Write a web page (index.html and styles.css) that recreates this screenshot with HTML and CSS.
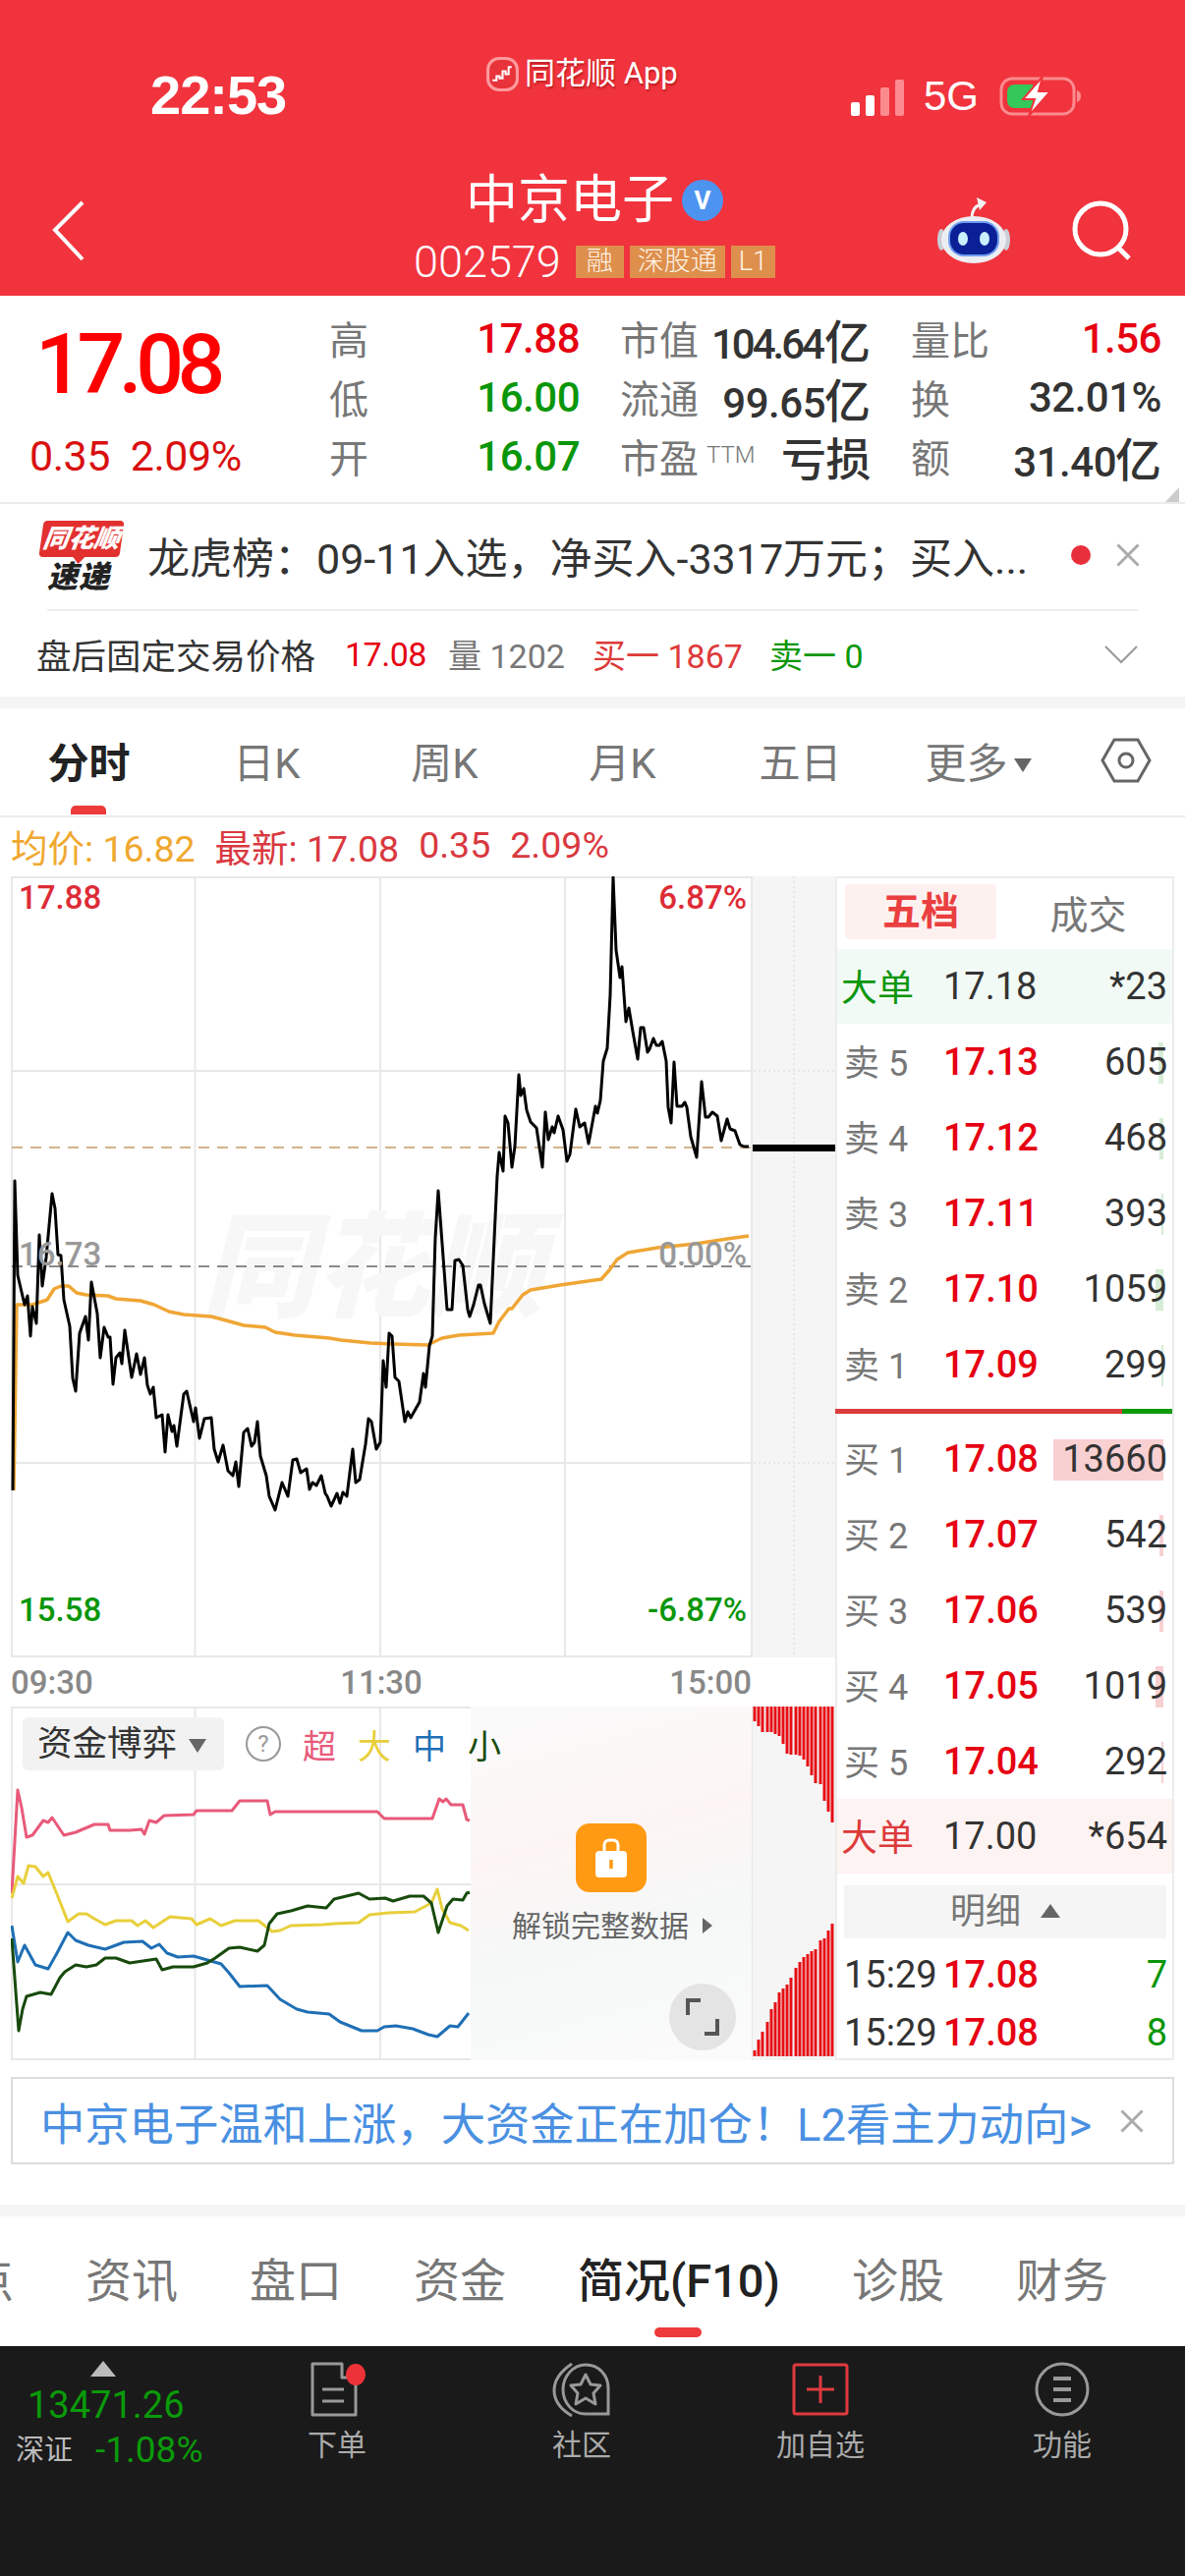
FILE: index.html
```html
<!DOCTYPE html>
<html lang="zh">
<head>
<meta charset="utf-8">
<title>中京电子 - 分时</title>
<link rel="stylesheet" href="styles.css">
</head>
<body>
<!-- red header -->
<header class="topbar">
  <div class="status">
    <div class="time">22:53</div>
    <div class="applabel">
      <svg class="applogo" viewBox="0 0 32 34"><rect x="1.500" y="1.500" width="29" height="31" rx="11" fill="#e8333a" stroke="#ff9a9e" stroke-width="3"/><path d="M6 23h4v-4h3v2h3v-7h3v3h3v-7h3" fill="none" stroke="#fff" stroke-width="2"/></svg>
      <span>同花顺 App</span>
    </div>
    <div class="sysicons">
      <div class="signal"><i class="s1"></i><i class="s2"></i><i class="s3"></i><i class="s4"></i></div>
      <span class="net">5G</span>
      <svg class="battery" viewBox="0 0 84 42"><rect x="2" y="3" width="74" height="36" rx="11" fill="none" stroke="#fb8b8f" stroke-width="3"/><path d="M79 15c3 1 4 3 4 6s-1 5-4 6z" fill="#fb8b8f"/><path d="M8 17c0-5 3-8 8-8h18v24H16c-5 0-8-3-8-8z" fill="#34c759"/><path d="M44 1 24 24h12l-6 17 22-25H40z" fill="#fff" stroke="#f1333d" stroke-width="2"/></svg>
    </div>
  </div>
  <div class="nav">
    <svg class="back" viewBox="0 0 34 62"><path d="M31 2 3 30l28 30" fill="none" stroke="#fff" stroke-width="4"/></svg>
    <div class="stock">
      <div class="stockname">中京电子<span class="vbadge">V</span></div>
      <div class="stockcode">002579<span class="tag first">融</span><span class="tag">深股通</span><span class="tag">L1</span></div>
    </div>
    <div class="navright">
      <svg class="robot" viewBox="0 0 76 68"><path d="M36 22c0-7 3-12 9-14" fill="none" stroke="#f4f4f4" stroke-width="3"/><path d="M41 1l10 5-7 8z" fill="#f4f4f4"/><ellipse cx="5" cy="44" rx="4" ry="11" fill="#c9cdd6"/><ellipse cx="71" cy="44" rx="4" ry="11" fill="#c9cdd6"/><ellipse cx="38" cy="44" rx="33" ry="24" fill="#eceef2"/><rect x="12" y="25" width="52" height="36" rx="16" fill="#6f9df0"/><rect x="14" y="27" width="48" height="32" rx="14" fill="#0b1f96"/><ellipse cx="27" cy="43" rx="5" ry="7" fill="#c8f0ff"/><ellipse cx="49" cy="43" rx="5" ry="7" fill="#c8f0ff"/></svg>
      <svg class="search" viewBox="0 0 62 62"><circle cx="29" cy="29" r="26" fill="none" stroke="#fff" stroke-width="5"/><path d="M47 48l11 11" stroke="#fff" stroke-width="5"/></svg>
    </div>
  </div>
</header>

<!-- quote summary -->
<section class="quote">
  <div class="quotemain">
    <div class="bigprice">17.08</div>
    <div class="bigchange"><span>0.35</span><span>2.09%</span></div>
  </div>
  <div class="stats">
    <div class="stat"><span class="lab">高</span><span class="val red">17.88</span></div>
    <div class="stat"><span class="lab">市值</span><span class="val tight">104.64<span class="unit">亿</span></span></div>
    <div class="stat"><span class="lab">量比</span><span class="val red">1.56</span></div>
    <div class="stat"><span class="lab">低</span><span class="val green">16.00</span></div>
    <div class="stat"><span class="lab">流通</span><span class="val">99.65<span class="unit">亿</span></span></div>
    <div class="stat"><span class="lab">换</span><span class="val">32.01%</span></div>
    <div class="stat"><span class="lab">开</span><span class="val green">16.07</span></div>
    <div class="stat"><span class="lab">市盈<sup class="ttm">TTM</sup></span><span class="val loss">亏损</span></div>
    <div class="stat"><span class="lab">额</span><span class="val">31.40<span class="unit">亿</span></span></div>
  </div>
  <i class="corner"></i>
</section>

<!-- news ticker -->
<section class="news">
  <div class="newslogo">
    <div class="bubble"><span>同花顺</span></div>
    <div class="sudi">速递</div>
  </div>
  <div class="newstext">龙虎榜：09-11入选，净买入-3317万元；买入...</div>
  <i class="reddot"></i>
  <svg class="closex" viewBox="0 0 24 24"><path d="M3 3l18 18M21 3 3 21" stroke="#aaa" stroke-width="2.500"/></svg>
</section>
<div class="newsline"></div>
<section class="after">
  <span class="aftertitle">盘后固定交易价格</span>
  <span class="afterprice">17.08</span>
  <span class="aftervol">量 1202</span>
  <span class="afterbuy">买一 1867</span>
  <span class="aftersell">卖一 0</span>
  <svg class="chevron" viewBox="0 0 36 20"><path d="M2 2l16 16L34 2" fill="none" stroke="#999" stroke-width="2"/></svg>
</section>
<div class="band"></div>

<!-- period tabs -->
<nav class="periods">
  <span class="period active">分时</span>
  <span class="period">日K</span>
  <span class="period">周K</span>
  <span class="period">月K</span>
  <span class="period">五日</span>
  <span class="period">更多<i class="more"></i></span>
  <svg class="hexicon" viewBox="0 0 52 46"><path d="M14 2h24l12 21-12 21H14L2 23z" fill="none" stroke="#666" stroke-width="3"/><circle cx="26" cy="23" r="7" fill="none" stroke="#666" stroke-width="3"/></svg>
</nav>
<div class="avgrow">
  <span class="avg">均价: 16.82</span>
  <span class="last">最新: 17.08</span>
  <span class="last">0.35</span>
  <span class="last">2.09%</span>
</div>

<!-- charts and order book -->
<section class="market">
  <div class="charts">
    <svg class="pricechart" viewBox="11 892 839 795">
      <rect x="765" y="892" width="85" height="795" fill="#f5f5f5"/>
      <path d="M12 893H765M12 1090H765M12 1489H765M12 1686H765M12 892V1687M198.500 892V1687M387 892V1687M575 892V1687M765 892V1687" class="gridline"/>
      <path d="M767 1090H849M767 1489H849M808 892V1687" class="dotline"/>
      <text x="205" y="1331" class="watermark">同花顺</text>
      <path d="M12 1168H765" class="dash-tan"/>
      <path d="M12 1289H765" class="dash-gray"/>
      <polyline class="avgline" points="14,1517 17,1328 23,1328 33,1328 48,1323 55,1312 62,1309 70,1309 78,1316 88,1318 110,1319 118,1322 143,1324 157,1328 172,1335 187,1338 215,1340 230,1344 248,1349 270,1351 280,1356 300,1359 335,1362 347,1364 377,1367 400,1368 435,1369 450,1362 467,1359 502,1357 508,1345 518,1332 521,1332 532,1318 540,1313 570,1308 612,1302 620,1293 628,1282 639,1275 669,1270 708,1266 740,1261 762,1258"/>
      <polyline class="priceline" points="13,1517 15,1202 18,1298 25,1328 28,1319 31,1360 33,1330 37,1347 40,1257 43,1309 47,1280 53,1215 56,1230 59,1277 62,1278 65,1323 71,1350 74,1403 77,1416 81,1357 87,1340 90,1364 93,1305 99,1337 102,1382 106,1351 110,1361 112,1361 115,1409 118,1382 122,1377 124,1388 127,1354 134,1402 139,1378 143,1399 147,1382 150,1410 153,1419 156,1412 159,1443 165,1440 168,1478 171,1440 175,1457 177,1451 180,1472 187,1419 190,1416 197,1447 199,1433 203,1464 208,1444 215,1443 218,1475 222,1488 227,1471 232,1497 237,1502 240,1488 243,1513 248,1458 252,1454 256,1472 259,1468 262,1447 265,1482 271,1502 274,1523 280,1537 287,1509 293,1523 298,1486 302,1485 306,1499 312,1495 315,1516 318,1509 322,1512 327,1502 331,1520 333,1523 337,1533 343,1520 346,1530 349,1519 353,1523 359,1475 362,1509 366,1506 372,1470 375,1444 378,1447 383,1475 387,1468 390,1385 393,1412 396,1357 399,1360 402,1402 406,1406 412,1447 415,1437 418,1443 427,1427 431,1398 433,1412 437,1370 440,1360 443,1260 446,1212 455,1333 460,1333 463,1283 467,1282 471,1288 476,1333 478,1340 482,1328 487,1308 489,1308 493,1327 499,1347 506,1197 508,1173 512,1192 514,1136 517,1143 521,1188 524,1167 528,1094 530,1115 533,1108 536,1130 540,1142 546,1148 552,1188 555,1132 558,1160 562,1147 564,1153 568,1136 573,1150 577,1182 580,1175 586,1129 590,1147 595,1143 599,1164 606,1126 608,1133 611,1120 614,1080 618,1067 621,1013 624,893 627,967 631,995 633,984 637,1040 640,1026 644,1050 649,1078 652,1046 655,1046 659,1071 661,1068 665,1057 668,1064 671,1064 674,1060 678,1080 680,1127 683,1143 686,1081 689,1126 694,1126 697,1122 699,1127 703,1157 709,1178 714,1101 718,1137 721,1137 725,1132 730,1136 734,1161 740,1139 743,1149 748,1151 753,1165 757,1167 762,1167"/>
      <rect x="766" y="1165" width="84" height="7" fill="#000"/>
      <text x="19" y="925" class="axis redtxt">17.88</text>
      <text x="760" y="925" class="axis redtxt end">6.87%</text>
      <text x="19" y="1288" class="axis graytxt">16.73</text>
      <text x="760" y="1288" class="axis graytxt end">0.00%</text>
      <text x="19" y="1650" class="axis greentxt">15.58</text>
      <text x="760" y="1650" class="axis greentxt end">-6.87%</text>
    </svg>
    <div class="timeaxis"><span>09:30</span><span>11:30</span><span>15:00</span></div>
    <div class="flowchart">
      <svg class="flowsvg" viewBox="11 1737 839 360">
        <rect x="765" y="1737" width="85" height="360" fill="#f5f5f5"/>
        <path d="M12 1738H765M12 1918H765M12 2096H765M12 1737V2097M198.500 1737V2097M387 1737V2097M765 1737V2097" class="gridline"/>
        <polyline class="flow fpink" points="12,1927 18,1822 22,1840 27,1870 33,1868 44,1853 49,1855 53,1850 65,1868 77,1865 96,1857 110,1857 112,1863 132,1863 144,1862 147,1867 152,1853 159,1855 167,1848 197,1847 200,1843 236,1843 244,1833 272,1833 275,1847 280,1844 384,1844 391,1851 440,1851 447,1831 451,1834 454,1831 459,1837 471,1837 475,1852 478,1853"/>
        <polyline class="flow fyellow" points="12,1932 18,1910 24,1917 29,1899 36,1900 44,1910 49,1906 58,1928 69,1956 80,1948 88,1948 96,1953 107,1959 118,1955 134,1955 140,1960 148,1955 156,1962 173,1951 195,1953 200,1959 214,1953 225,1960 239,1955 263,1955 277,1966 285,1965 296,1960 329,1959 340,1958 365,1957 376,1949 395,1947 422,1946 439,1937 445,1923 450,1943 458,1957 469,1960 477,1965"/>
        <polyline class="flow fblue" points="12,1960 18,1997 25,1980 36,2000 49,2004 58,1988 69,1967 77,1975 90,1980 107,1984 126,1977 145,1976 154,1983 162,1979 170,1988 181,1992 197,1991 225,1999 233,2008 244,2022 272,2021 285,2035 302,2045 313,2048 335,2050 346,2058 368,2067 384,2067 391,2063 403,2062 420,2065 436,2071 445,2073 458,2062 466,2063 477,2049"/>
        <polyline class="flow fgreen" points="12,1973 19,2067 23,2045 27,2032 41,2028 52,2030 61,2013 66,2007 77,2000 88,2002 98,2000 107,1993 118,1993 132,1998 159,1994 165,2005 176,2002 197,2002 211,1998 219,1993 233,1983 244,1982 262,1986 269,1980 274,1958 282,1948 296,1945 313,1940 332,1942 340,1933 365,1927 376,1933 392,1932 400,1935 417,1930 431,1930 439,1937 446,1967 455,1940 461,1933 471,1934 475,1927 478,1926"/>
        <path class="bars" d="M768 1737V1752M772 1737V1757M776 1737V1763M781 1737V1763M785 1737V1763M789 1737V1765M793 1737V1767M797 1737V1775M801 1737V1785M805 1737V1786M810 1737V1786M814 1737V1787M818 1737V1791M822 1737V1798M826 1737V1807M830 1737V1815M835 1737V1816M839 1737V1833M843 1737V1844M847 1737V1855"/>
        <path class="bars" d="M768 2093V2087M772 2093V2076M776 2093V2068M781 2093V2058M785 2093V2045M789 2093V2038M793 2093V2028M797 2093V2024M801 2093V2020M805 2093V2013M810 2093V2003M814 2093V1997M818 2093V1992M822 2093V1989M826 2093V1986M830 2093V1984M835 2093V1975M839 2093V1973M843 2093V1965M847 2093V1958"/>
      </svg>
      <div class="lockmask">
        <div class="lockicon">
          <svg viewBox="0 0 34 42" width="34" height="42"><path d="M10 16V8c0-3 2-5 5-5h4c3 0 5 2 5 5v8" fill="none" stroke="#fff" stroke-width="3"/><rect x="1" y="14" width="32" height="27" rx="4" fill="#fff"/><path d="M17 23v9" stroke="#ff9a12" stroke-width="3.500"/></svg>
        </div>
        <div class="locktext">解锁完整数据<i class="lockarrow"></i></div>
        <div class="expand">
          <svg viewBox="0 0 36 40" width="36" height="40"><path d="M16 3H3v15M20 37h13V22" fill="none" stroke="#555" stroke-width="4"/></svg>
        </div>
      </div>
      <div class="flowhead">
        <div class="flowpill">资金博弈<i class="more"></i></div>
        <i class="qmark">?</i>
        <span class="lg-pink">超</span><span class="lg-yellow">大</span><span class="lg-blue">中</span><span class="lg-green">小</span>
      </div>
    </div>
  </div>

  <aside class="book">
    <div class="booktabs"><span class="booktab on">五档</span><span class="booktab">成交</span></div>
    <div class="row bigrow sellbig"><span class="lab greenlab">大单</span><span class="px dark">17.18</span><span class="vol">*23</span></div>
    <div class="row"><span class="lab">卖 5</span><span class="px">17.13</span><span class="vol"><i class="volbar gbar" style="width:5px"></i>605</span></div>
    <div class="row"><span class="lab">卖 4</span><span class="px">17.12</span><span class="vol"><i class="volbar gbar" style="width:4px"></i>468</span></div>
    <div class="row"><span class="lab">卖 3</span><span class="px">17.11</span><span class="vol"><i class="volbar gbar" style="width:2px"></i>393</span></div>
    <div class="row"><span class="lab">卖 2</span><span class="px">17.10</span><span class="vol"><i class="volbar gbar" style="width:8px"></i>1059</span></div>
    <div class="row"><span class="lab">卖 1</span><span class="px">17.09</span><span class="vol"><i class="volbar gbar" style="width:2px"></i>299</span></div>
    <div class="split"><i class="splitred" style="width:292px"></i><i class="splitgreen"></i></div>
    <div class="row"><span class="lab">买 1</span><span class="px">17.08</span><span class="vol"><i class="volbar rbar" style="width:112px"></i>13660</span></div>
    <div class="row"><span class="lab">买 2</span><span class="px">17.07</span><span class="vol"><i class="volbar rbar" style="width:4px"></i>542</span></div>
    <div class="row"><span class="lab">买 3</span><span class="px">17.06</span><span class="vol"><i class="volbar rbar" style="width:4px"></i>539</span></div>
    <div class="row"><span class="lab">买 4</span><span class="px">17.05</span><span class="vol"><i class="volbar rbar" style="width:8px"></i>1019</span></div>
    <div class="row"><span class="lab">买 5</span><span class="px">17.04</span><span class="vol"><i class="volbar rbar" style="width:2px"></i>292</span></div>
    <div class="row bigrow buybig"><span class="lab redlab">大单</span><span class="px dark">17.00</span><span class="vol">*654</span></div>
    <div class="detailhead">明细<i class="uptri"></i></div>
    <div class="row tick"><span class="lab dark">15:29</span><span class="px">17.08</span><span class="vol green">7</span></div>
    <div class="row tick"><span class="lab dark">15:29</span><span class="px">17.08</span><span class="vol green">8</span></div>
  </aside>
</section>

<div class="promo">
  <span class="promotext">中京电子温和上涨，大资金正在加仓！L2看主力动向&gt;</span>
  <svg class="closex" viewBox="0 0 24 24"><path d="M3 3l18 18M21 3 3 21" stroke="#aaa" stroke-width="2.500"/></svg>
</div>
<div class="band bandlow"></div>

<nav class="subtabs">
  <span class="subtab">点</span>
  <span class="subtab">资讯</span>
  <span class="subtab">盘口</span>
  <span class="subtab">资金</span>
  <span class="subtab active">简况(F10)</span>
  <span class="subtab">诊股</span>
  <span class="subtab">财务</span>
</nav>

<footer class="dock">
  <div class="index">
    <i class="indextri"></i>
    <div class="indexval">13471.26</div>
    <div class="indexsub"><span class="indexname">深证</span><span class="indexpct">-1.08%</span></div>
  </div>
  <div class="dockitem">
    <svg viewBox="0 0 60 56"><path d="M5 2h30v14h14v38H5z" fill="none" stroke="#999" stroke-width="3" stroke-linejoin="round"/><path d="M15 28h22M15 40h22" stroke="#999" stroke-width="3"/><ellipse cx="49" cy="13" rx="10" ry="11" fill="#ee3338"/></svg>
    <span>下单</span>
  </div>
  <div class="dockitem community">
    <svg viewBox="0 0 60 56"><path d="M20 2C8 10 2 18 2 29s6 19 18 26" fill="none" stroke="#999" stroke-width="3"/><path d="M34 3c13 0 23 10 23 24v26H34C20 53 11 41 11 28S21 3 34 3z" fill="none" stroke="#999" stroke-width="3"/><path d="M34 13l5 10 10 1-7 8 2 11-10-6-10 6 2-11-7-8 10-1z" fill="none" stroke="#999" stroke-width="3" stroke-linejoin="round"/></svg>
    <span>社区</span>
  </div>
  <div class="dockitem">
    <svg viewBox="0 0 60 56"><rect x="3" y="3" width="54" height="50" rx="2" fill="none" stroke="#e03a3e" stroke-width="3"/><path d="M30 14v28M16 28h28" stroke="#e03a3e" stroke-width="3"/></svg>
    <span>加自选</span>
  </div>
  <div class="dockitem">
    <svg viewBox="0 0 60 56"><ellipse cx="30" cy="28" rx="26" ry="26" fill="none" stroke="#999" stroke-width="3"/><path d="M21 17h18M21 28h18M21 39h18" stroke="#999" stroke-width="4"/></svg>
    <span>功能</span>
  </div>
</footer>
</body>
</html>
```

FILE: styles.css
```css
* {
    box-sizing: border-box;
}

html, body {
    margin: 0;
    padding: 0;
}

body {
    width: 1206px;
    height: 2622px;
    overflow: hidden;
    background: #fff;
    color: #333;
    font-family: Roboto, "Noto Sans CJK SC", sans-serif;
}

i {
    font-style: normal;
}

.red { color: #e60012; }
.green { color: #0a960a; }

/* header */
.topbar {
    height: 301px;
    background: #f1333d;
    color: #fff;
}

.status {
    height: 150px;
    display: flex;
    align-items: flex-start;
    position: relative;
}

.time {
    width: 143px;
    margin: 66px 0 0 153px;
    font-size: 56px;
    line-height: 62px;
    font-weight: 700;
    letter-spacing: -1px;
    font-family: "Liberation Sans", sans-serif;
}

.applabel {
    display: flex;
    align-items: center;
    gap: 6px;
    margin: 54px 0 0 199px;
    width: 196px;
    font-size: 31px;
    line-height: 42px;
    white-space: nowrap;
    text-shadow: 1px 2px 2px rgba(120, 0, 0, 0.45);
}

.applogo {
    width: 33px;
    height: 35px;
    flex: none;
}

.sysicons {
    display: flex;
    align-items: center;
    margin: 76px 0 0 175px;
    height: 44px;
}

.signal {
    display: flex;
    align-items: flex-end;
    gap: 6px;
    height: 37px;
    margin-top: 2px;
}

.signal i {
    width: 9px;
    border-radius: 2px;
    background: #fff;
}

.signal .s1 { height: 14px; }
.signal .s2 { height: 21px; }
.signal .s3 { height: 29px; background: #fb8b8f; }
.signal .s4 { height: 37px; background: #fb8b8f; }

.net {
    margin-left: 20px;
    font-size: 42px;
    line-height: 44px;
    font-family: "Liberation Sans", sans-serif;
}

.battery {
    width: 84px;
    height: 42px;
    margin-left: 21px;
}

.nav {
    height: 151px;
    display: grid;
    grid-template-columns: 1fr auto 1fr;
    align-items: start;
}

.back {
    width: 34px;
    height: 62px;
    margin: 54px 0 0 53px;
}

.stock {
    display: flex;
    flex-direction: column;
    align-items: center;
    margin-left: 4px;
}

.stockname {
    display: flex;
    align-items: center;
    height: 68px;
    margin-top: 20px;
    font-size: 53px;
    line-height: 68px;
}

.vbadge {
    width: 42px;
    height: 42px;
    margin-left: 8px;
    border-radius: 50%;
    background: #4d94f0;
    font-size: 26px;
    font-weight: 700;
    line-height: 42px;
    text-align: center;
}

.stockcode {
    display: flex;
    align-items: center;
    height: 44px;
    margin-top: 6px;
    font-size: 45px;
    font-weight: 300;
}

.tag {
    height: 33px;
    margin-left: 6px;
    padding: 0 8px;
    background: #de8f4c;
    color: #fff3e6;
    font-size: 27px;
    line-height: 33px;
}

.tag.first {
    margin-left: 15px;
    padding: 0 11px;
}

.navright {
    display: flex;
    justify-content: flex-end;
    align-items: flex-start;
    gap: 62px;
    padding: 50px 53px 0 0;
}

.robot {
    width: 76px;
    height: 68px;
}

.search {
    width: 62px;
    height: 62px;
    margin-top: 4px;
}

/* quote */
.quote {
    position: relative;
    height: 212px;
    padding-left: 30px;
    display: flex;
    border-bottom: 2px solid #ececec;
}

.quotemain {
    width: 305px;
}

.bigprice {
    margin: 16px 0 0 6px;
    font-size: 86px;
    line-height: 108px;
    font-weight: 500;
    letter-spacing: -6.500px;
    color: #f00;
}

.bigchange {
    display: flex;
    gap: 21px;
    margin-top: 15px;
    font-size: 43px;
    line-height: 48px;
    letter-spacing: -0.500px;
    color: #d90f0f;
}

.stats {
    display: grid;
    grid-template-columns: repeat(3, 255px);
    column-gap: 41px;
    grid-auto-rows: 60px;
    padding-top: 13px;
}

.stat {
    display: flex;
    justify-content: space-between;
    align-items: center;
}

.stat .lab {
    font-size: 40px;
    color: #777;
    white-space: nowrap;
}

.ttm {
    margin-left: 8px;
    font-size: 24px;
    font-weight: 300;
    vertical-align: 10px;
    line-height: 0;
}

.stat .val {
    font-size: 42px;
    letter-spacing: -0.500px;
    font-weight: 500;
    white-space: nowrap;
}

.stat .val.tight {
    letter-spacing: -3px;
}

.stat .val .unit {
    font-size: 47px;
    margin-left: -1px;
    letter-spacing: 0;
}

.stat .val.tight .unit {
    margin-left: 2px;
}

.stat .val.loss {
    font-size: 46px;
}

.corner {
    position: absolute;
    right: 6px;
    bottom: 0;
    width: 0;
    height: 0;
    border-left: 14px solid transparent;
    border-bottom: 15px solid #ccc;
}

/* news */
.news {
    height: 107px;
    display: flex;
    align-items: center;
    padding-left: 37px;
}

.newslogo {
    width: 92px;
    flex: none;
}

.bubble {
    position: relative;
    height: 37px;
    margin-left: 5px;
    width: 82px;
    border-radius: 4px;
    background: #e2302f;
    transform: skewX(-8deg);
    text-align: center;
}

.bubble span {
    display: block;
    color: #fff;
    font-size: 26px;
    line-height: 37px;
    font-weight: 900;
    font-style: italic;
}

.bubble::after {
    content: "";
    position: absolute;
    left: 35px;
    bottom: -7px;
    border-left: 6px solid transparent;
    border-right: 6px solid transparent;
    border-top: 7px solid #e2302f;
}

.sudi {
    margin: 5px 0 0 11px;
    font-size: 31px;
    line-height: 32px;
    font-weight: 900;
    font-style: italic;
    color: #222;
    letter-spacing: 1px;
}

.newstext {
    margin: -4px 0 0 21px;
    width: 920px;
    flex: none;
    font-size: 43px;
    color: #333;
    white-space: nowrap;
}

.reddot {
    width: 20px;
    height: 20px;
    margin: -3px 0 0 20px;
    flex: none;
    border-radius: 50%;
    background: #e8303a;
}

.closex {
    width: 28px;
    height: 28px;
    flex: none;
}

.news .closex {
    margin: -3px 0 0 24px;
}

.newsline {
    height: 2px;
    margin: 0 48px;
    background: #eee;
}

.after {
    height: 87px;
    display: flex;
    align-items: center;
    padding-left: 37px;
    font-size: 34px;
    white-space: nowrap;
}

.aftertitle {
    font-size: 35.500px;
    width: 314px;
    color: #333;
}

.afterprice {
    width: 105px;
    letter-spacing: -0.500px;
    color: #e60012;
}

.aftervol {
    width: 147px;
    color: #777;
}

.afterbuy {
    width: 180px;
    color: #dd3a3a;
}

.aftersell {
    color: #0a960a;
}

.chevron {
    width: 36px;
    height: 20px;
    margin-left: 244px;
}

.band {
    height: 12px;
    background: #f5f5f5;
}

/* period tabs */
.periods {
    position: relative;
    height: 111px;
    display: grid;
    grid-template-columns: repeat(6, 181px) 120px;
    align-items: center;
    justify-items: center;
    padding-bottom: 4px;
    border-bottom: 2px solid #ececec;
}

.period {
    font-size: 42px;
    color: #777;
}

.period.active {
    font-weight: 700;
    color: #222;
}

.period.active::after {
    content: "";
    position: absolute;
    left: 72px;
    bottom: 1px;
    width: 36px;
    height: 9px;
    border-radius: 5px 5px 0 0;
    background: #ee3a3a;
}

.more {
    display: inline-block;
    margin-left: 6px;
    vertical-align: 6px;
    border-left: 9px solid transparent;
    border-right: 9px solid transparent;
    border-top: 14px solid #666;
}

.hexicon {
    width: 52px;
    height: 46px;
}

.avgrow {
    height: 56px;
    display: flex;
    align-items: center;
    gap: 20px;
    padding-left: 11px;
    font-size: 37.500px;
    white-space: nowrap;
}

.avg { color: #f0a830; }
.last { color: #d9393f; }

/* charts */
.market {
    height: 1209px;
    padding: 4px 0 0 11px;
    display: flex;
}

.charts {
    width: 839px;
    flex: none;
}

.pricechart {
    display: block;
    width: 839px;
    height: 795px;
}

.gridline {
    fill: none;
    stroke: #e8e8e8;
    stroke-width: 2;
}

.dotline {
    fill: none;
    stroke: #e6e6e6;
    stroke-width: 2;
    stroke-dasharray: 2 3;
}

.dash-tan {
    fill: none;
    stroke: #d3b38c;
    stroke-width: 2;
    stroke-dasharray: 11 8;
}

.dash-gray {
    fill: none;
    stroke: #666;
    stroke-width: 1.500;
    stroke-dasharray: 11 8;
}

.watermark {
    font-size: 116px;
    font-weight: 900;
    font-style: italic;
    fill: #f7f7f7;
}

.priceline {
    fill: none;
    stroke: #000;
    stroke-width: 3;
    stroke-linejoin: round;
}

.avgline {
    fill: none;
    stroke: #f0a635;
    stroke-width: 3.500;
    stroke-linejoin: round;
}

.axis {
    font-size: 33px;
    font-weight: 500;
}

.axis.end { text-anchor: end; }
.redtxt { fill: #dd2c36; }
.graytxt { fill: #999; }
.greentxt { fill: #0a960a; }

.timeaxis {
    height: 50px;
    width: 754px;
    display: flex;
    justify-content: space-between;
    align-items: center;
    font-size: 33px;
    font-weight: 500;
    color: #888;
}

.flowchart {
    position: relative;
    height: 360px;
}

.flowsvg {
    display: block;
    width: 839px;
    height: 360px;
}

.flow {
    fill: none;
    stroke-width: 3;
    stroke-linejoin: round;
}

.fpink { stroke: #e85a7a; }
.fyellow { stroke: #e8cf3c; }
.fblue { stroke: #1f6fb5; }
.fgreen { stroke: #174a0c; }

.bars {
    fill: none;
    stroke: #e60f14;
    stroke-width: 3;
}

.flowhead {
    position: absolute;
    left: 12px;
    top: 11px;
    display: flex;
    align-items: center;
    font-size: 34px;
}

.flowpill {
    width: 205px;
    height: 54px;
    padding-left: 15px;
    border-radius: 6px;
    background: #f2f2f2;
    line-height: 54px;
    font-size: 35.500px;
    color: #333;
    white-space: nowrap;
}

.flowpill .more {
    margin-left: 12px;
    vertical-align: 3px;
}

.qmark {
    width: 36px;
    height: 36px;
    margin: 0 22px;
    border: 2px solid #999;
    border-radius: 50%;
    text-align: center;
    font-size: 24px;
    line-height: 32px;
    color: #999;
}

.flowhead span {
    width: 33px;
    margin-right: 23px;
}

.lg-pink { color: #e85a7a; }
.lg-yellow { color: #e8cf3c; }
.lg-blue { color: #1f6fb5; }
.lg-green { color: #174a0c; }

.lockmask {
    position: absolute;
    left: 468px;
    top: 0;
    width: 286px;
    height: 360px;
    background: linear-gradient(165deg, #fafafa 0%, #fdf5f5 38%, #f5f8f7 62%, #fbfbfb 100%);
}

.lockicon {
    position: absolute;
    left: 107px;
    top: 119px;
    width: 72px;
    height: 70px;
    border-radius: 14px;
    background: #ff9a12;
    display: flex;
    align-items: center;
    justify-content: center;
}

.locktext {
    position: absolute;
    left: 42px;
    top: 204px;
    font-size: 30px;
    line-height: 40px;
    color: #666;
    white-space: nowrap;
}

.lockarrow {
    display: inline-block;
    margin-left: 14px;
    vertical-align: 3px;
    border-top: 8px solid transparent;
    border-bottom: 8px solid transparent;
    border-left: 10px solid #666;
}

.expand {
    position: absolute;
    left: 202px;
    top: 282px;
    width: 68px;
    height: 68px;
    border-radius: 50%;
    background: #e4e4e4;
    display: flex;
    align-items: center;
    justify-content: center;
}

/* order book */
.book {
    width: 345px;
    height: 1205px;
    flex: none;
    display: flex;
    flex-direction: column;
    border: 2px solid #ececec;
}

.booktabs {
    height: 72px;
    flex: none;
    display: grid;
    grid-template-columns: 154px 1fr;
    align-items: center;
    padding: 6px 0 10px 8px;
    font-size: 39px;
    text-align: center;
    color: #777;
}

.booktab {
    padding-left: 8px;
}

.booktab.on {
    height: 56px;
    padding-left: 0;
    line-height: 56px;
    border-radius: 4px;
    background: #fdf1f0;
    color: #ea3f3f;
    font-weight: 700;
}

.row {
    height: 77px;
    flex: none;
    display: grid;
    grid-template-columns: 103px 100px 1fr;
    align-items: center;
    padding: 0 5px 0 7px;
    font-size: 38px;
    white-space: nowrap;
}

.row .lab {
    margin-top: -3px;
    font-size: 36px;
    color: #777;
}

.row .px {
    margin-left: -2px;
    font-weight: 500;
    color: #e60012;
}

.row .vol {
    position: relative;
    z-index: 0;
    text-align: right;
    color: #333;
}

.row .dark {
    font-weight: 400;
    color: #333;
}

.row .lab.dark {
    margin-top: 0;
    font-size: 38px;
}

.row .vol.green {
    color: #0a960a;
}

.bigrow {
    height: 76px;
}

.sellbig { background: #f2faf5; }
.buybig { background: #fdf3f2; }

.row .greenlab {
    margin-left: -3px;
    color: #0a960a;
    font-size: 37px;
}

.row .redlab {
    margin-left: -3px;
    color: #dd3a3a;
    font-size: 37px;
}

.volbar {
    position: absolute;
    right: 4px;
    top: 2px;
    height: 42px;
    z-index: -1;
}

.gbar { background: #d6ecd6; }
.rbar { background: #f8d0d2; }

.split {
    height: 19px;
    flex: none;
    display: flex;
    padding-top: 7px;
    margin-left: -2px;
}

.split i {
    height: 5px;
}

.splitred { background: #dc3c3c; }
.splitgreen { flex: 1; background: #0a9a0a; }

.detailhead {
    height: 54px;
    flex: none;
    margin: 12px 6px 7px 7px;
    background: #f5f5f5;
    text-align: center;
    font-size: 36px;
    line-height: 54px;
    color: #777;
}

.uptri {
    display: inline-block;
    margin-left: 20px;
    vertical-align: 6px;
    border-left: 10px solid transparent;
    border-right: 10px solid transparent;
    border-bottom: 14px solid #666;
}

.tick {
    height: 59px;
}

/* promo banner */
.promo {
    height: 89px;
    margin: 17px 11px 0;
    display: flex;
    align-items: center;
    padding-left: 28px;
    border: 2px solid #ddd;
}

.promotext {
    width: 1097px;
    flex: none;
    font-size: 45.300px;
    color: #4a90e2;
    white-space: nowrap;
}

.bandlow {
    margin-top: 41px;
}

/* bottom tabs */
.subtabs {
    height: 132px;
    display: flex;
    gap: 73px;
    align-items: center;
    margin-left: -33px;
    padding-bottom: 10px;
    white-space: nowrap;
    position: relative;
}

.subtab {
    font-size: 47px;
    color: #777;
}

.subtab.active {
    position: relative;
    font-weight: 500;
    color: #222;
}

.subtab.active::after {
    content: "";
    position: absolute;
    left: 78px;
    top: 86px;
    width: 48px;
    height: 10px;
    border-radius: 5px;
    background: #ee3a3a;
}

/* dock */
.dock {
    height: 234px;
    background: #1a1a1a;
    display: grid;
    grid-template-columns: 220px repeat(4, 246px);
    align-items: start;
}

.index {
    position: relative;
    padding: 41px 0 0 16px;
}

.indextri {
    position: absolute;
    left: 92px;
    top: 15px;
    border-left: 13px solid transparent;
    border-right: 13px solid transparent;
    border-bottom: 16px solid #bbb;
}

.indexval {
    padding-left: 12px;
    font-size: 38px;
    line-height: 38px;
    color: #0a9a0a;
}

.indexsub {
    display: flex;
    align-items: center;
    gap: 23px;
    margin-top: 7px;
    line-height: 40px;
}

.indexname {
    font-size: 29px;
    color: #bbb;
}

.indexpct {
    font-size: 37px;
    color: #0a9a0a;
}

.dockitem {
    display: flex;
    flex-direction: column;
    align-items: center;
    padding-top: 16px;
    font-size: 30px;
    color: #aaa;
}

.dockitem.community {
    padding-left: 6px;
}

.dockitem svg {
    width: 60px;
    height: 56px;
    margin-bottom: 4px;
}
```
